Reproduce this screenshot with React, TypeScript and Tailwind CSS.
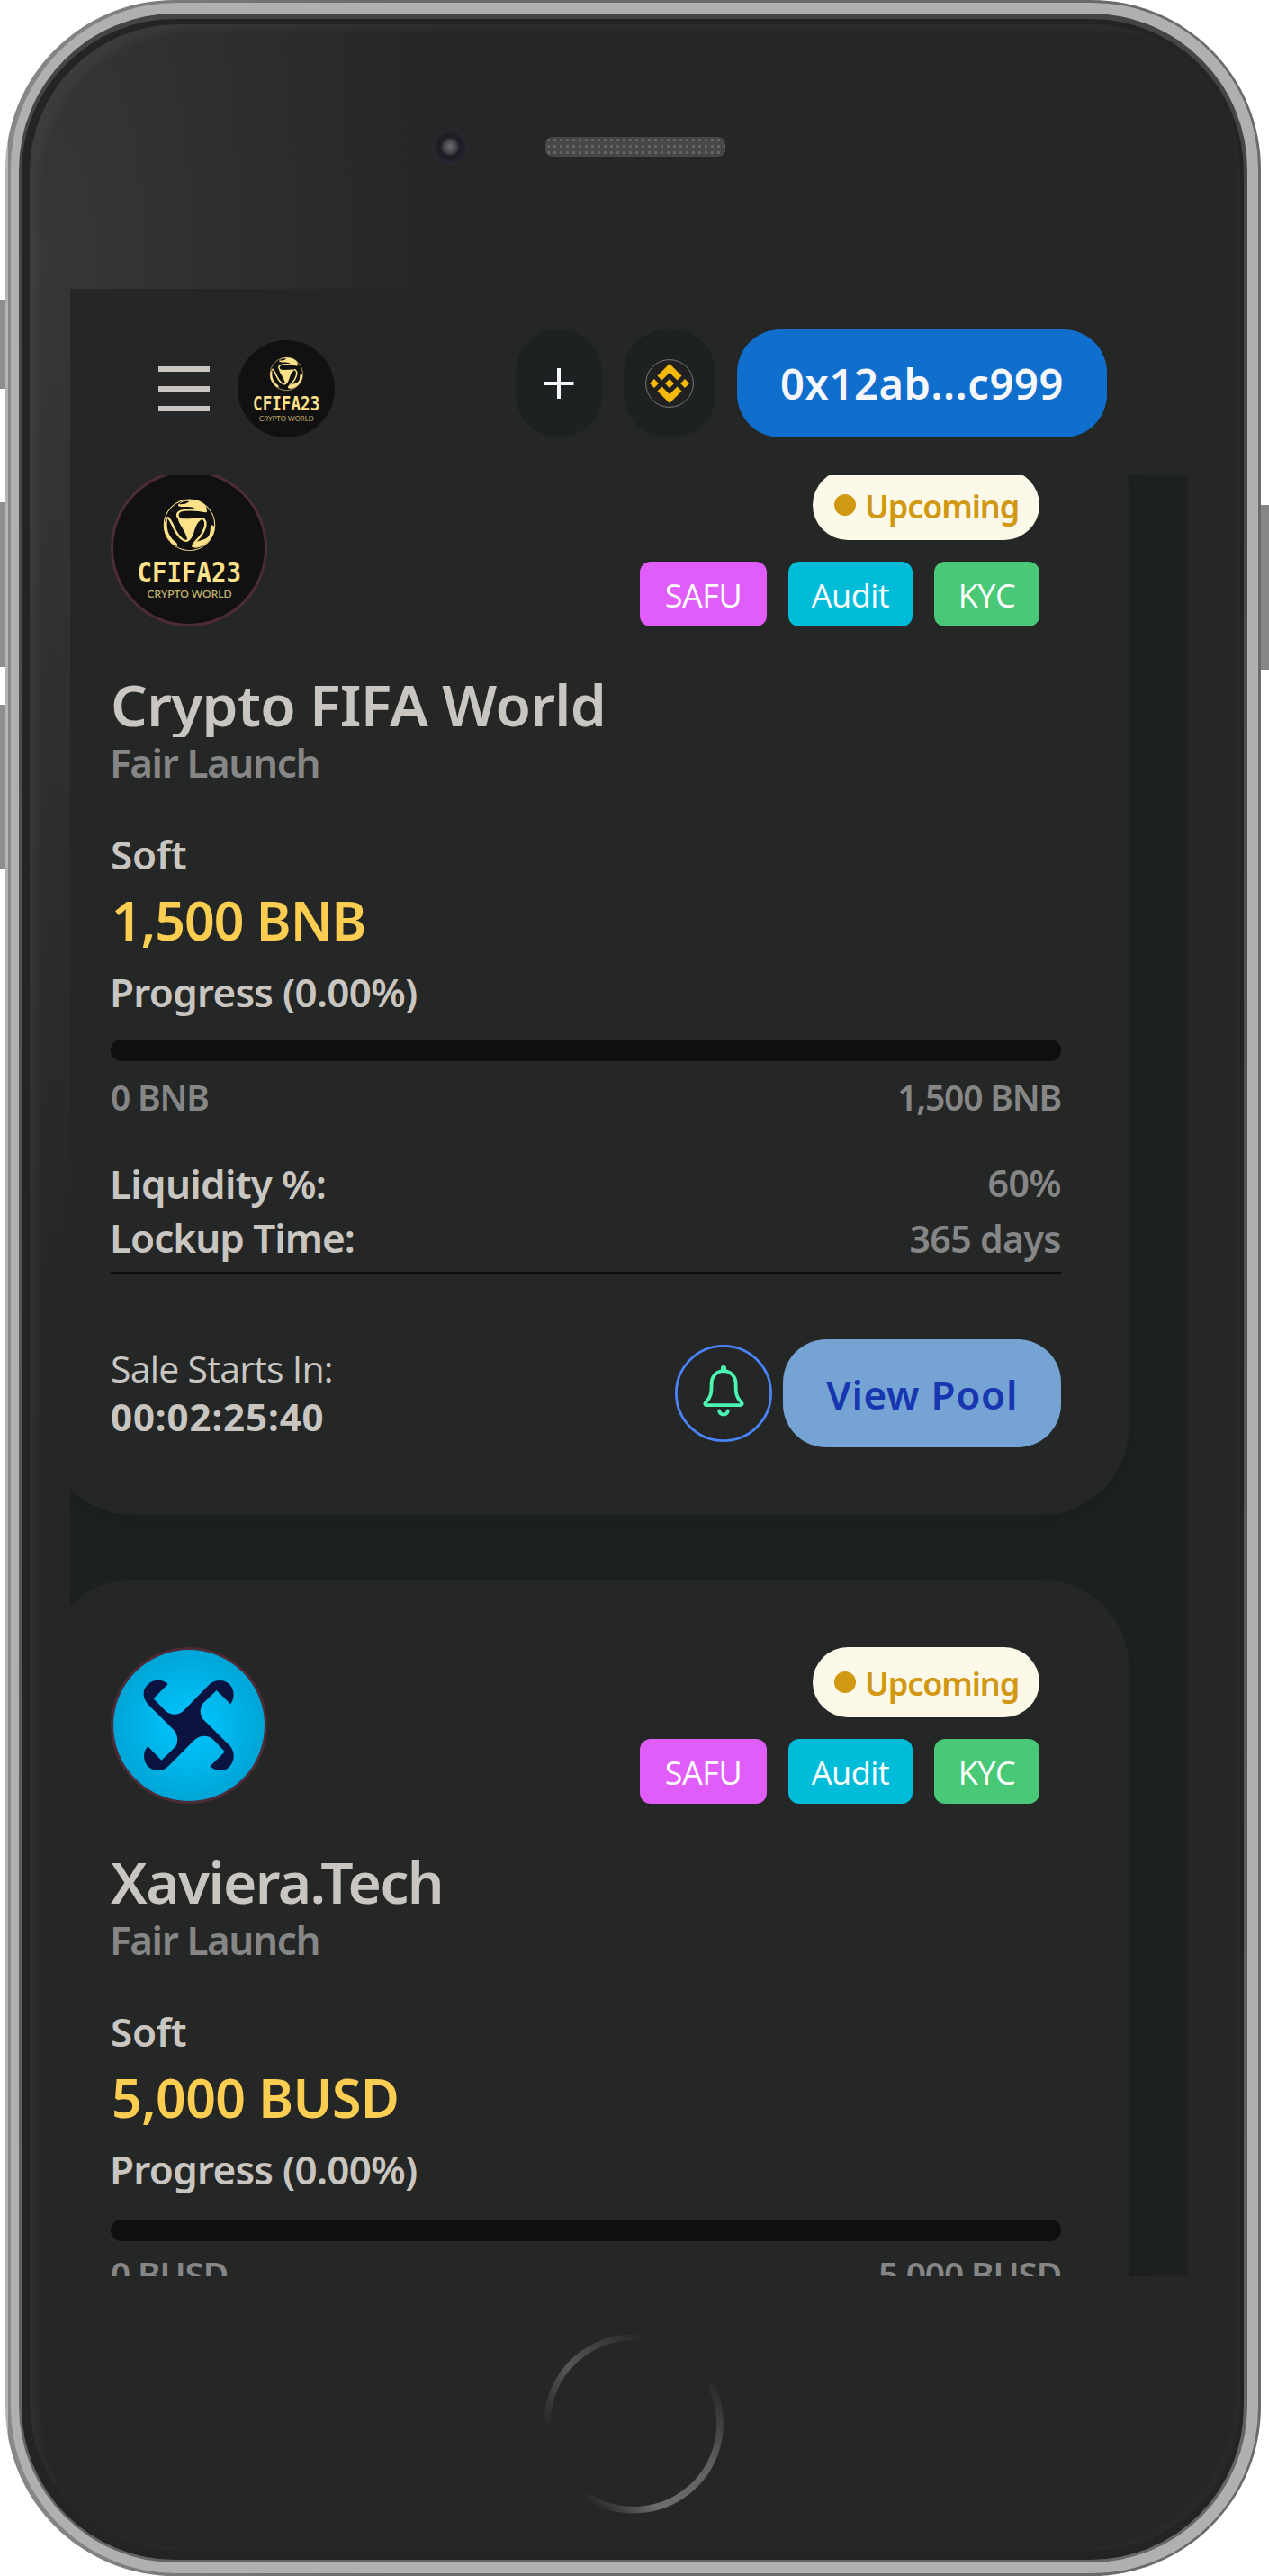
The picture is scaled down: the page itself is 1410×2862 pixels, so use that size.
type Pool = {
  name: string;
  nameClass: string;
  logo: 'cfifa' | 'xaviera';
  soft: string;
  softClass: string;
  from: string;
  to: string;
  barClass: string;
};

const pools: Pool[] = [
  {
    name: 'Crypto FIFA World',
    nameClass: 'tracking-[-0.7px]',
    logo: 'cfifa',
    soft: '1,500 BNB',
    softClass: 'tracking-[-1px]',
    from: '0 BNB',
    to: '1,500 BNB',
    barClass: 'mt-[26px] mb-[16px]',
  },
  {
    name: 'Xaviera.Tech',
    nameClass: 'tracking-[-1.6px]',
    logo: 'xaviera',
    soft: '5,000 BUSD',
    softClass: 'tracking-[-0.6px]',
    from: '0 BUSD',
    to: '5,000 BUSD',
    barClass: 'mt-[29px] mb-[13px]',
  },
];

function CfifaArt() {
  return (
    <>
      <g transform="translate(-63 -202) scale(.4337 .3333)">
        <ellipse cx="347" cy="790" rx="65" ry="85" fill="none" stroke="#fde28a" strokeWidth="2.5" />
        <g fill="#fde28a">
          <path d="M318 726C318 716 330 706 347 705C375 704 396 724 391 746C380 748 368 740 358 733C345 725 328 733 318 726Z" />
          <path d="M318 767C340 773 362 764 384 767C368 776 364 792 359 812C354 832 349 842 342 844C342 828 334 812 328 797C323 787 318 778 318 767Z" />
          <path d="M292 762C280 780 279 808 289 828C296 842 304 856 316 861C319 850 309 845 301 833C290 815 287 790 292 762Z" />
          <path d="M403 790C411 790 413 800 409 814C402 842 384 864 364 866C353 866 352 856 362 848C378 838 392 840 398 822C402 810 399 800 403 790Z" />
        </g>
        <path d="M320 720C326 712 338 708 346 711C343 718 330 722 320 720Z" fill="#111" />
        <g fill="none" stroke="#fde28a" strokeWidth="6" strokeLinecap="round">
          <path d="M389 745C365 739 336 737 323 744C313 751 315 767 326 771" />
          <path d="M292 765C301 776 306 800 316 820C324 836 336 847 343 841" />
          <path d="M381 768C393 778 388 800 379 820C371 838 355 850 356 861" />
        </g>
      </g>
      <text x="29.5" y="124.7" textLength="115.5" lengthAdjust="spacingAndGlyphs" fontSize="32.5" fontWeight="700" fill="#fde28a" fontFamily="'DejaVu Sans Mono', monospace">
        CFIFA23
      </text>
      <text x="40.5" y="142.3" textLength="94" lengthAdjust="spacingAndGlyphs" fontSize="12" fill="#c2b16c" fontFamily="Lato, sans-serif">
        CRYPTO WORLD
      </text>
    </>
  );
}

function XavieraArt() {
  return (
    <>
      <defs>
        <radialGradient id="sky">
          <stop offset="0" stopColor="#00c4fc" />
          <stop offset=".3" stopColor="#00bef5" />
          <stop offset="1" stopColor="#00a5d6" />
        </radialGradient>
      </defs>
      <circle cx="87" cy="87" r="84.5" fill="url(#sky)" />
      <path
        transform="translate(-123 -90) scale(.4464 .3333)"
        fill="#0b1440"
        d="M418 393C405 377 385 377 372 390C352 410 354 440 370 463L432 545C444 560 444 590 436 603L402 647L368 601C355 620 355 650 370 670C385 686 405 684 418 668L482 582C497 562 518 562 530 577L560 619L523 667C535 683 556 686 569 672C585 650 586 622 573 600L510 516C496 500 496 475 506 457L539 414L574 460C585 440 585 410 569 391C556 376 535 378 522 393L457 482C444 498 425 498 412 482L382 442Z"
      />
    </>
  );
}

function Avatar({ logo }: { logo: Pool['logo'] }) {
  return (
    <svg className="size-[174px]" viewBox="0 0 174 174">
      <circle cx="87" cy="87" r="86" fill="#111" />
      {logo === 'cfifa' ? <CfifaArt /> : <XavieraArt />}
      <circle cx="87" cy="87" r="85.5" fill="none" stroke="#4d2c38" strokeWidth="3" />
    </svg>
  );
}

function BnbIcon() {
  return (
    <svg className="size-[54px]" viewBox="0 0 54 54">
      <circle cx="27" cy="27" r="26.4" fill="#202021" stroke="#77797a" strokeWidth="1" />
      <path
        transform="translate(-8.2 -8.2) scale(2.2)"
        fill="#f5b90b"
        d="M12.116 14.404L16 10.52l3.886 3.886 2.26-2.26L16 6l-6.144 6.144 2.26 2.26zM6 16l2.26-2.26L10.52 16l-2.26 2.26L6 16zm6.116 1.596L16 21.48l3.886-3.886 2.26 2.259L16 26l-6.144-6.144-.003-.003 2.263-2.257zM21.48 16l2.26-2.26L26 16l-2.26 2.26L21.48 16zM18.294 16L16 18.294 13.706 16 16 13.706z"
      />
    </svg>
  );
}

function BellIcon() {
  return (
    <svg className="size-[108px]" viewBox="0 0 108 108" fill="none" stroke="#4cf7b2" strokeWidth="3.8" strokeLinecap="round" strokeLinejoin="round">
      <circle cx="54" cy="54" r="52.6" stroke="#4b83fb" strokeWidth="2.8" />
      <circle cx="54" cy="26" r="1.6" fill="#4cf7b2" strokeWidth="3" />
      <path d="M54 29.2C46.5 29.2 40.6 35 40.6 43.5C40.6 54 40 58.5 34.3 63.8C32.6 65.6 33.4 67.2 35.4 67.2H72.6C74.6 67.2 75.4 65.6 73.7 63.8C68 58.5 67.6 54 67.6 43.5C67.6 35 61.5 29.2 54 29.2Z" />
      <path d="M49.2 73.5C49.8 79 58.2 79 58.8 73.5" />
    </svg>
  );
}

function Tag({ label, className }: { label: string; className: string }) {
  return (
    <span className={`flex h-[72px] items-center justify-center rounded-[12px] pt-[4px] font-['Open_Sans',sans-serif] text-[36px] font-normal leading-[48px] tracking-[-0.5px] text-white ${className}`}>
      {label}
    </span>
  );
}

function PoolCard({ pool }: { pool: Pool }) {
  return (
    <article className="flex h-[1236px] w-[1203px] flex-col rounded-[96px] bg-[#252726] pt-[75px] pr-[75px] pl-[72px] font-semibold text-[#c9c6c2] shadow-[0_6px_24px_rgba(0,0,0,0.12)]">
      <div className="flex justify-between pr-[24px]">
        <Avatar logo={pool.logo} />
        <div className="flex flex-col items-end gap-[24px]">
          <span className="flex h-[78px] w-[252px] items-center rounded-full bg-[#fdf9e8] pl-[24px] text-[36px] tracking-[-1.1px] whitespace-nowrap text-[#d19814]">
            <span className="mr-[10px] size-[24px] shrink-0 rounded-full bg-[#d19814]" />
            <span className="pt-[3px] leading-[48px]">Upcoming</span>
          </span>
          <div className="flex gap-[24px]">
            <Tag label="SAFU" className="w-[141px] bg-[#e15dfa]" />
            <Tag label="Audit" className="w-[138px] bg-[#00bcd8]" />
            <Tag label="KYC" className="w-[117px] bg-[#49c977]" />
          </div>
        </div>
      </div>

      <h2 className={`mt-[50px] h-[73px] overflow-hidden text-[64px] leading-[74px] whitespace-nowrap ${pool.nameClass}`}>{pool.name}</h2>
      <p className="mt-px -ml-px text-[44px] leading-[54px] tracking-[-1.4px] text-[#868686]">Fair Launch</p>

      <p className="mt-[48px] text-[44px] leading-[54px] tracking-[-0.3px]">Soft</p>
      <p className={`mt-[10px] ml-px text-[59px] leading-[72px] text-[#fbcd50] ${pool.softClass}`}>{pool.soft}</p>
      <p className="mt-[17px] -ml-px text-[44px] leading-[54px] tracking-[-0.75px]">Progress (0.00%)</p>
      <div className={`h-[24px] shrink-0 rounded-full bg-[#0e100f] ${pool.barClass}`} />
      <div className="flex justify-between text-[39px] leading-[48px] tracking-[-1.2px] text-[#868686]">
        <span>{pool.from}</span>
        <span>{pool.to}</span>
      </div>

      <div className="mt-[42px] flex justify-between text-[44px] leading-[60px]">
        <span className="-ml-px tracking-[-0.7px]">Liquidity %:</span>
        <span className="text-[41px] leading-[58px] tracking-[-0.4px] text-[#868686]">60%</span>
      </div>
      <div className="flex justify-between text-[44px] leading-[60px]">
        <span className="-ml-px tracking-[-1px]">Lockup Time:</span>
        <span className="text-[41px] leading-[62px] tracking-[-0.6px] text-[#868686]">365 days</span>
      </div>
      <div className="mt-[6px] h-[3px] shrink-0 bg-[#0e100f]" />

      <div className="mt-[72px] flex h-[120px] items-center justify-between">
        <div className="pb-[2px]">
          <p className="font-['Open_Sans',sans-serif] text-[41px] font-normal leading-[54px] tracking-[-0.75px]">Sale Starts In:</p>
          <p className="text-[42px] font-bold leading-[54px] tracking-[0.9px]">00:02:25:40</p>
        </div>
        <div className="flex items-center gap-[12px]">
          <BellIcon />
          <button className="h-[120px] w-[309px] rounded-[48px] bg-[#75a4d4] pt-[2px] text-[44px] font-semibold tracking-[0.7px] text-[#1736b0]">View Pool</button>
        </div>
      </div>
    </article>
  );
}

function Header() {
  return (
    <header className="relative z-10 flex h-[207px] items-start justify-between bg-[#252726] pr-[90px] pl-[98px]">
      <div className="mt-[57px] flex h-[108px] items-center gap-[31px]">
        <div className="flex w-[57px] flex-col gap-[16px]">
          <span className="h-[6px] bg-[#c9c6c2]" />
          <span className="h-[6px] bg-[#c9c6c2]" />
          <span className="h-[6px] bg-[#c9c6c2]" />
        </div>
        <svg className="size-[108px] rounded-full bg-[#111]" viewBox="3 3 168 168">
          <CfifaArt />
        </svg>
      </div>
      <div className="mt-[45px] flex h-[120px] gap-[24px]">
        <span className="flex w-[96px] items-center justify-center rounded-[48px] bg-[#1d2122]">
          <svg className="size-[34px]" viewBox="0 0 34 34" stroke="#f7f7fb" strokeWidth="4">
            <path d="M17 0V34M0.5 17H33.5" />
          </svg>
        </span>
        <span className="flex w-[102px] items-center justify-center rounded-[48px] bg-[#1d2122]">
          <BnbIcon />
        </span>
        <span className="flex w-[411px] items-center justify-center rounded-[48px] bg-[#106ecd] pt-px text-[47px] font-semibold tracking-[0.6px] text-[#f5f7fd]">0x12ab...c999</span>
      </div>
    </header>
  );
}

function HomeButton() {
  return (
    <svg className="size-[204px]" viewBox="0 0 204 204" fill="none" strokeLinecap="round">
      <defs>
        <linearGradient id="rimTop" x1="0" y1="1" x2="1" y2="0">
          <stop offset="0" stopColor="#262626" />
          <stop offset=".45" stopColor="#565656" />
          <stop offset="1" stopColor="#262626" />
        </linearGradient>
        <linearGradient id="rimBottom" gradientUnits="userSpaceOnUse" x1="190" y1="50" x2="50" y2="185">
          <stop offset="0" stopColor="#262626" />
          <stop offset=".35" stopColor="#606060" />
          <stop offset=".75" stopColor="#6c6c6c" />
          <stop offset="1" stopColor="#262626" />
        </linearGradient>
      </defs>
      <path d="M7 108A96 96 0 0 1 118 8" stroke="url(#rimTop)" strokeWidth="7" />
      <path d="M190 62A96 96 0 0 1 52 184" stroke="url(#rimBottom)" strokeWidth="7.5" />
    </svg>
  );
}

export default function App() {
  return (
    <div className="relative h-[2862px] w-[1410px] overflow-hidden bg-white font-['Noto_Sans',sans-serif]">
      {/* Side keys */}
      <span className="absolute top-[333px] left-0 h-[99px] w-[12px] bg-[linear-gradient(to_right,#8e8e8e_6px,#6e6e6e_6px)]" />
      <span className="absolute top-[558px] left-0 h-[183px] w-[12px] bg-[linear-gradient(to_right,#8e8e8e_6px,#6e6e6e_6px)]" />
      <span className="absolute top-[783px] left-0 h-[182px] w-[12px] bg-[linear-gradient(to_right,#8e8e8e_6px,#6e6e6e_6px)]" />
      <span className="absolute top-[561px] right-0 h-[183px] w-[12px] bg-[#868686]" />

      {/* Metal rim, drawn as nested rounded shells */}
      <div className="relative ml-[6px] h-[2862px] w-[1395px] rounded-[188px] bg-[linear-gradient(to_right,#b4b4b4_3px,#888_3px,#6a6a6a_30%)] pt-[3px] pr-[3px] pb-[3px] pl-[6px]">
        <div className="h-full rounded-[184px] bg-[#b0b0b0] pt-[12px] pr-[12px] pb-[12px] pl-[9px]">
          <div className="h-full rounded-[174px] bg-[linear-gradient(to_bottom,#444,#666)] pt-[6px] pr-[4px] pb-[3px] pl-[3px]">
            <div className="h-full rounded-[170px] bg-[#242424] pt-[6px] pr-[4px] pb-[10px] pl-[9px]">
              <div className="flex h-full flex-col rounded-[164px] bg-[#262626] bg-[radial-gradient(ellipse_480px_1300px_at_20px_260px,#373737,#2d2d2d_50%,#272727_85%,#262626)] pl-[45px] shadow-[inset_18px_14px_10px_-8px_rgba(255,255,255,0.045),inset_-14px_-12px_10px_-8px_rgba(255,255,255,0.02)]">
                <div className="flex h-[294px] shrink-0 items-start pt-[114px] pl-[400px]">
                  <span className="flex size-[44px] items-center justify-center rounded-full bg-[radial-gradient(#1e1e26_45%,#28282f_60%,#262626_72%)]">
                    <span className="size-[20px] rounded-full bg-[radial-gradient(#6c6c72,#48484e_45%,#26262c_72%)]" />
                  </span>
                  <span className="mt-[11px] ml-[84px] h-[22px] w-[200px] rounded-[8px] bg-[#474747] bg-[radial-gradient(#646464_30%,transparent_40%)] bg-size-[7px_7px]" />
                </div>
                <main className="h-[2208px] w-[1242px] shrink-0 overflow-hidden bg-[#1e2122]">
                  <Header />
                  <div className="-mt-[81px] -ml-[27px] flex flex-col gap-[72px]">
                    {pools.map((pool) => (
                      <PoolCard key={pool.name} pool={pool} />
                    ))}
                  </div>
                </main>
                <div className="mt-[61px] ml-[523px]">
                  <HomeButton />
                </div>
              </div>
            </div>
          </div>
        </div>
      </div>
    </div>
  );
}
